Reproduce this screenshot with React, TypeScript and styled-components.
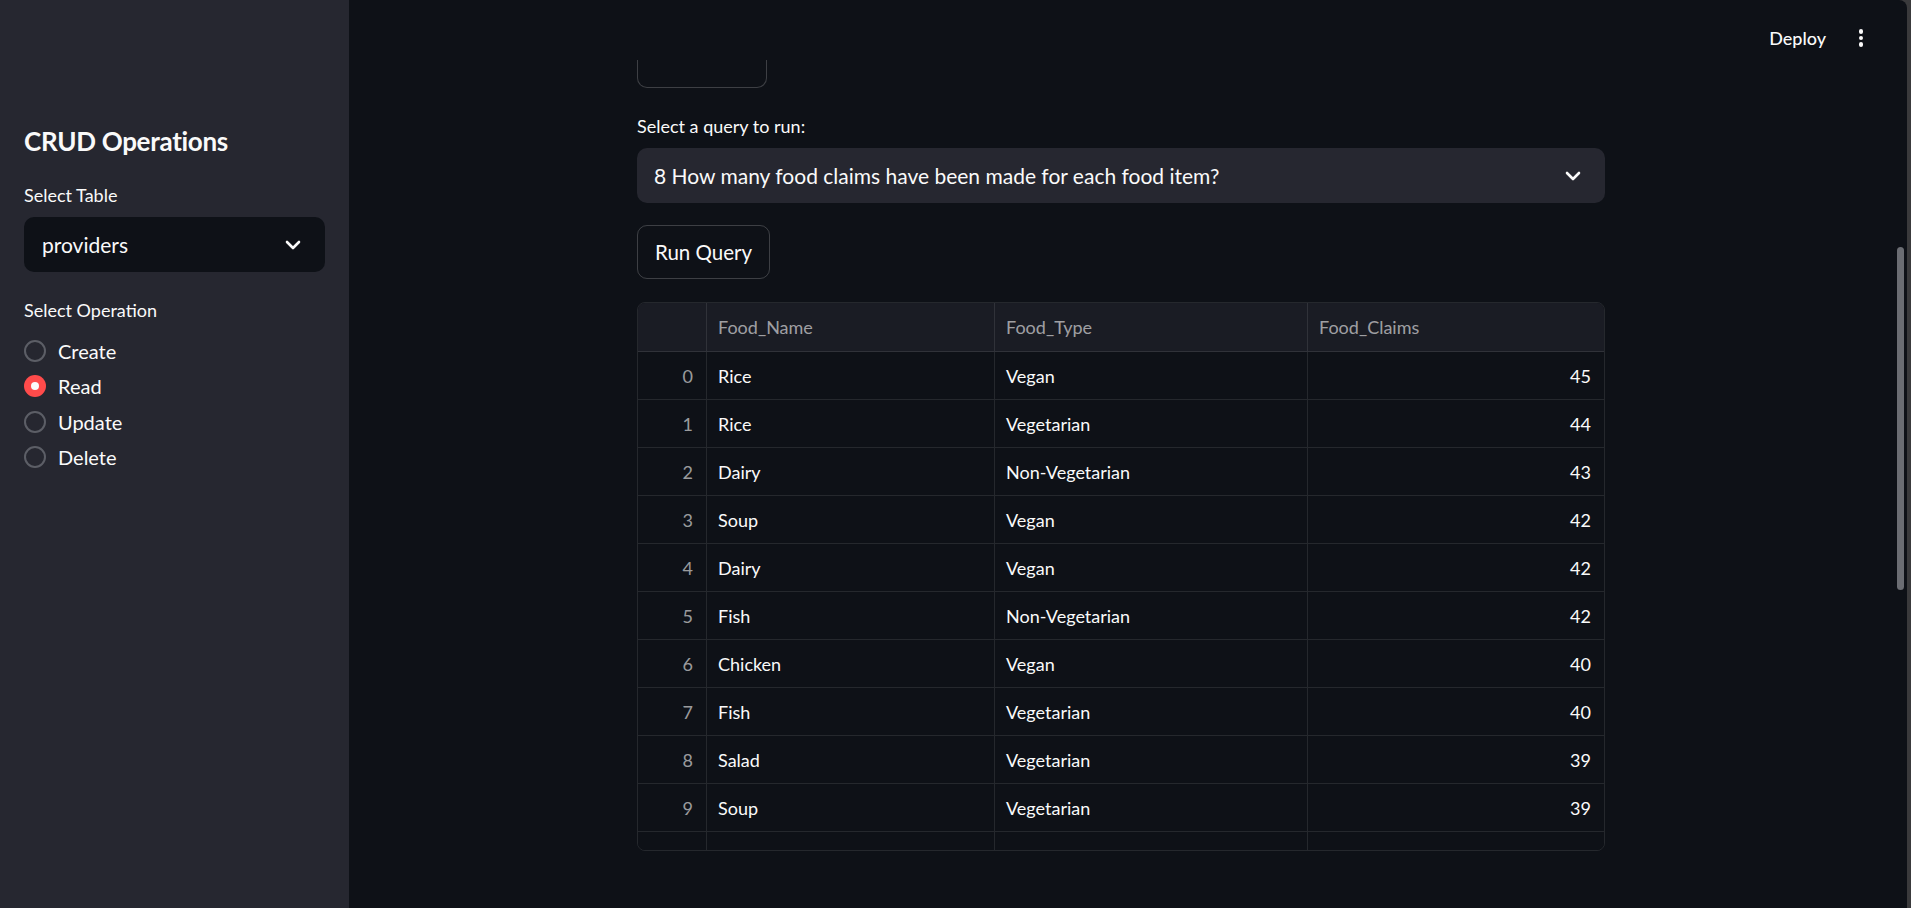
import React from "react";
import styled, { createGlobalStyle } from "styled-components";

const GlobalStyle = createGlobalStyle`
  html, body { margin: 0; padding: 0; background: #3a3a3c; }
  body { font-family: Lato, "Noto Sans", sans-serif; color: #fafafa; }
  * { box-sizing: border-box; }
`;

const Shell = styled.div`
  display: flex;
  width: 100vw;
  height: 100vh;
  overflow: hidden;
  padding-right: 4px;
  background: #3a3a3c;
`;

const Sidebar = styled.aside`
  width: 349px;
  flex: 0 0 349px;
  background: #262730;
  padding: 124px 24px 0 24px;
  display: flex;
  flex-direction: column;
`;

const SideTitle = styled.h2`
  margin: 0;
  font-size: 26px;
  line-height: 34px;
  font-weight: 700;
  letter-spacing: -0.3px;
`;

const FieldLabel = styled.div<{ $top: number }>`
  margin-top: ${(p) => p.$top}px;
  font-size: 18px;
  line-height: 24px;
  color: #fafafa;
`;

const SelectBox = styled.div<{ $dark?: boolean; $top: number }>`
  margin-top: ${(p) => p.$top}px;
  height: 55px;
  border-radius: 10px;
  background: ${(p) => (p.$dark ? "#0e1117" : "#262730")};
  display: flex;
  align-items: center;
  justify-content: space-between;
  padding: 0 24px 0 18px;
  font-size: 21px;
  color: #fafafa;
`;

const RadioGroup = styled.div`
  margin-top: 11px;
  display: flex;
  flex-direction: column;
`;

const RadioRow = styled.label`
  height: 35.5px;
  display: flex;
  align-items: center;
  gap: 12px;
  font-size: 20px;
  color: #fafafa;
`;

const RadioDot = styled.span<{ $on?: boolean }>`
  width: 22px;
  height: 22px;
  border-radius: 50%;
  flex: 0 0 22px;
  border: ${(p) => (p.$on ? "none" : "2px solid #5c5e66")};
  background: ${(p) => (p.$on ? "#ff4b4b" : "transparent")};
  display: flex;
  align-items: center;
  justify-content: center;
  &::after {
    content: "";
    display: ${(p) => (p.$on ? "block" : "none")};
    width: 8px;
    height: 8px;
    border-radius: 50%;
    background: #fafafa;
  }
`;

const Main = styled.main`
  flex: 1;
  display: flex;
  background: #0e1117;
  border-top-right-radius: 8px;
  overflow: hidden;
`;

const MainColumn = styled.div`
  flex: 1;
  display: flex;
  flex-direction: column;
`;

const Header = styled.header`
  height: 60px;
  flex: 0 0 60px;
  display: flex;
  justify-content: flex-end;
  align-items: flex-start;
  padding: 26px 28px 0 0;
  gap: 31px;
`;

const DeployText = styled.span`
  font-size: 18px;
  line-height: 24px;
  font-weight: 500;
  color: #fafafa;
`;

const Kebab = styled.span`
  margin-top: 3px;
  width: 8px;
  display: flex;
  flex-direction: column;
  align-items: center;
  gap: 2px;
  & > i {
    width: 4.5px;
    height: 4.5px;
    border-radius: 50%;
    background: #fafafa;
  }
`;

const Content = styled.section`
  width: 968px;
  margin: 0 auto;
  display: flex;
  flex-direction: column;
  align-items: flex-start;
`;

const ClippedButton = styled.div`
  width: 130px;
  height: 28px;
  border: 1px solid rgba(250, 250, 250, 0.2);
  border-top: none;
  border-radius: 0 0 10px 10px;
`;

const QueryLabel = styled(FieldLabel)`
  align-self: stretch;
`;

const QuerySelect = styled(SelectBox)`
  align-self: stretch;
  padding-left: 17px;
`;

const Button = styled.button`
  margin-top: 22px;
  height: 54px;
  padding: 0 17px;
  border-radius: 10px;
  border: 1px solid rgba(250, 250, 250, 0.2);
  background: transparent;
  color: #fafafa;
  font-family: inherit;
  font-size: 20.5px;
`;

const Table = styled.div`
  margin-top: 23px;
  align-self: stretch;
  height: 549px;
  border: 1px solid rgba(250, 250, 250, 0.1);
  border-radius: 8px;
  overflow: hidden;
`;

const Row = styled.div<{ $head?: boolean }>`
  display: grid;
  grid-template-columns: 69px 288px 313px 1fr;
  height: ${(p) => (p.$head ? 49 : 48)}px;
  background: ${(p) => (p.$head ? "#1a1c24" : "#0e1117")};
  border-bottom: 1px solid rgba(250, 250, 250, 0.1);
`;

const Cell = styled.div<{ $align?: "left" | "right"; $muted?: boolean }>`
  display: flex;
  align-items: center;
  justify-content: ${(p) => (p.$align === "right" ? "flex-end" : "flex-start")};
  padding: 0 13px 0 11px;
  border-right: 1px solid rgba(250, 250, 250, 0.1);
  font-size: 18px;
  color: ${(p) => (p.$muted ? "rgba(250,250,250,0.6)" : "#fafafa")};
  white-space: nowrap;
  overflow: hidden;
  &:last-child { border-right: none; }
`;

const Gutter = styled.div`
  width: 14px;
  flex: 0 0 14px;
  padding: 247px 3px 0 4px;
`;

const Thumb = styled.div`
  width: 7px;
  height: 343px;
  border-radius: 4px;
  background: #6b6d73;
`;

const Chevron = () => (
  <svg width="16" height="10" viewBox="0 0 16 10" fill="none">
    <path d="M2 2l6 6 6-6" stroke="#fafafa" strokeWidth="2.6" strokeLinecap="round" strokeLinejoin="round" />
  </svg>
);

const rows: [number, string, string, number][] = [
  [0, "Rice", "Vegan", 45],
  [1, "Rice", "Vegetarian", 44],
  [2, "Dairy", "Non-Vegetarian", 43],
  [3, "Soup", "Vegan", 42],
  [4, "Dairy", "Vegan", 42],
  [5, "Fish", "Non-Vegetarian", 42],
  [6, "Chicken", "Vegan", 40],
  [7, "Fish", "Vegetarian", 40],
  [8, "Salad", "Vegetarian", 39],
  [9, "Soup", "Vegetarian", 39],
  [10, "Bread", "Non-Vegetarian", 38],
];

export default function App() {
  return (
    <>
      <GlobalStyle />
      <Shell>
        <Sidebar>
          <SideTitle>CRUD Operations</SideTitle>
          <FieldLabel $top={25}>Select Table</FieldLabel>
          <SelectBox $dark $top={10}>
            <span>providers</span>
            <Chevron />
          </SelectBox>
          <FieldLabel $top={26}>Select Operation</FieldLabel>
          <RadioGroup>
            {["Create", "Read", "Update", "Delete"].map((op) => (
              <RadioRow key={op}>
                <RadioDot $on={op === "Read"} />
                {op}
              </RadioRow>
            ))}
          </RadioGroup>
        </Sidebar>
        <Main>
          <MainColumn>
            <Header>
              <DeployText>Deploy</DeployText>
              <Kebab>
                <i />
                <i />
                <i />
              </Kebab>
            </Header>
            <Content>
              <ClippedButton />
              <QueryLabel $top={26}>Select a query to run:</QueryLabel>
              <QuerySelect $top={10}>
                <span>8 How many food claims have been made for each food item?</span>
                <Chevron />
              </QuerySelect>
              <Button>Run Query</Button>
              <Table>
                <Row $head>
                  <Cell />
                  <Cell $muted>Food_Name</Cell>
                  <Cell $muted>Food_Type</Cell>
                  <Cell $muted>Food_Claims</Cell>
                </Row>
                {rows.map(([i, name, type, claims]) => (
                  <Row key={i}>
                    <Cell $align="right" $muted>{i}</Cell>
                    <Cell>{name}</Cell>
                    <Cell>{type}</Cell>
                    <Cell $align="right">{claims}</Cell>
                  </Row>
                ))}
              </Table>
            </Content>
          </MainColumn>
          <Gutter>
            <Thumb />
          </Gutter>
        </Main>
      </Shell>
    </>
  );
}
